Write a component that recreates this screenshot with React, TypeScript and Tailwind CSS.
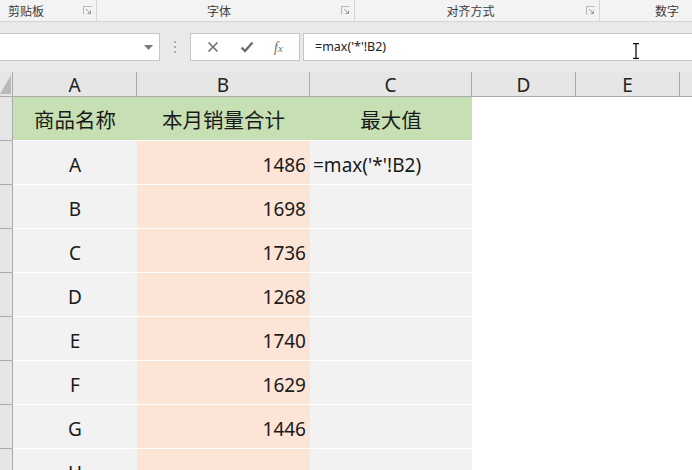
import React from 'react';

const font = { fontFamily: '"Noto Sans", "Noto Sans CJK SC", sans-serif' };

const rows = [
  { name: 'A', qty: '1486', max: "=max('*'!B2)" },
  { name: 'B', qty: '1698' },
  { name: 'C', qty: '1736' },
  { name: 'D', qty: '1268' },
  { name: 'E', qty: '1740' },
  { name: 'F', qty: '1629' },
  { name: 'G', qty: '1446' },
  { name: 'H', qty: '' },
];

function Launcher() {
  return (
    <svg width="9" height="9" viewBox="0 0 9 9" className="mt-[6px]">
      <path d="M0.5 8.5V0.5H8.5" fill="none" stroke="#b5b5b5" />
      <path d="M3 3L7.5 7.5M7.5 4.5V7.5H4.5" fill="none" stroke="#9a9a9a" />
    </svg>
  );
}

function RibbonGroup({ label, width, align = 'center' }: { label: string; width: string; align?: 'left' | 'center' }) {
  return (
    <div className={`${width} h-full flex items-start border-r border-[#d6d6d6] pr-[4px] shrink-0`}>
      <div className={`flex-1 pt-[3px] text-[12px] text-[#3b3b3b] ${align === 'left' ? 'pl-[8px] text-left' : 'text-center'}`}>
        {label}
      </div>
      <Launcher />
    </div>
  );
}

export default function App() {
  return (
    <div className="w-[692px] h-[470px] overflow-hidden bg-[#e9e9e9] text-[#1a1a1a]" style={font}>
      {/* ribbon group labels */}
      <div className="h-[22px] flex bg-[#f3f3f3] border-b border-[#d4d4d4]">
        <RibbonGroup label="剪贴板" width="w-[97px]" align="left" />
        <RibbonGroup label="字体" width="w-[258px]" />
        <RibbonGroup label="对齐方式" width="w-[245px]" />
        <div className="flex-1 pt-[3px] text-[12px] text-[#3b3b3b] text-right pr-[13px]">数字</div>
      </div>

      {/* formula bar */}
      <div className="h-[11px]" />
      <div className="h-[28px] flex items-stretch">
        <div className="w-[160px] bg-white border border-l-0 border-[#c6c6c6] flex items-center justify-end pr-[6px]">
          <svg width="9" height="5" viewBox="0 0 9 5">
            <path d="M0 0H9L4.5 5Z" fill="#7a7a7a" />
          </svg>
        </div>
        <div className="w-[30px] flex flex-col items-center justify-center gap-[3px]">
          <span className="w-[2px] h-[2px] bg-[#b0b0b0]" />
          <span className="w-[2px] h-[2px] bg-[#b0b0b0]" />
          <span className="w-[2px] h-[2px] bg-[#b0b0b0]" />
        </div>
        <div className="w-[110px] bg-white border border-[#c6c6c6] flex items-center justify-around px-[6px]">
          <svg width="12" height="12" viewBox="0 0 12 12">
            <path d="M1.5 1.5L10.5 10.5M10.5 1.5L1.5 10.5" stroke="#6e6e6e" strokeWidth="1.6" />
          </svg>
          <svg width="14" height="12" viewBox="0 0 14 12">
            <path d="M1.5 6.5L5 10L12.5 1.5" fill="none" stroke="#6e6e6e" strokeWidth="2.4" />
          </svg>
          <span className="text-[14px] italic text-[#6e6e6e]" style={{ fontFamily: '"Liberation Serif", serif' }}>
            f<span className="text-[11px]">x</span>
          </span>
        </div>
        <div className="flex-1 ml-[3px] bg-white border border-r-0 border-[#c6c6c6] flex items-center pl-[11px] relative">
          <span className="text-[12.5px] text-[#222]" style={{ fontFamily: '"Noto Sans", sans-serif' }}>
            =max('*'!B2)
          </span>
          <svg width="8" height="16" viewBox="0 0 8 16" className="absolute left-[328px] top-[9px]">
            <path d="M1 0.5H7M1 15.5H7M4 0.5V15.5" fill="none" stroke="#111" strokeWidth="1.3" />
          </svg>
        </div>
      </div>
      <div className="h-[11px]" />

      {/* column headers */}
      <div className="h-[25px] flex bg-[#e6e6e6] border-b border-[#ababab] text-[19px] leading-[27px] text-[#222]">
        <div className="w-[13px] border-r border-[#ababab] relative">
          <svg width="11" height="19" viewBox="0 0 11 19" className="absolute left-0 bottom-[2px]">
            <path d="M11 0V19H0Z" fill="#b9b9b9" />
          </svg>
        </div>
        <div className="w-[124px] text-center border-r border-[#ababab]">A</div>
        <div className="w-[173px] text-center border-r border-[#ababab]">B</div>
        <div className="w-[162px] text-center border-r border-[#ababab]">C</div>
        <div className="w-[104px] text-center border-r border-[#ababab]">D</div>
        <div className="w-[104px] text-center border-r border-[#ababab]">E</div>
        <div className="flex-1" />
      </div>

      {/* sheet body */}
      <div className="flex">
        <div className="w-[13px] bg-[#e6e6e6] border-r border-[#ababab] shrink-0">
          {[0, ...rows.map((_, i) => i + 1)].map((i) => (
            <div key={i} className="h-[44px] border-b border-[#ababab]" />
          ))}
        </div>
        <div className="flex-1 bg-white">
          <div className="h-[44px] flex text-[20.5px]">
            <div className="w-[459px] flex bg-[#c6e0b4] border-b border-white items-center pt-[3px]">
              <div className="w-[124px] text-center">商品名称</div>
              <div className="w-[173px] text-center">本月销量合计</div>
              <div className="w-[162px] text-center">最大值</div>
            </div>
          </div>
          {rows.map((r) => (
            <div key={r.name} className="h-[44px] flex text-[19px]">
              <div className="w-[124px] bg-[#f2f2f2] border-b border-white flex items-center justify-center pt-[5px]">
                {r.name}
              </div>
              <div className="w-[173px] bg-[#fce4d6] border-b border-white flex items-center justify-end pr-[4px] pt-[5px]">
                {r.qty}
              </div>
              <div className="w-[162px] bg-[#f2f2f2] border-b border-white flex items-center pl-[3px] pt-[5px] whitespace-nowrap">
                {r.max ?? ''}
              </div>
            </div>
          ))}
        </div>
      </div>
    </div>
  );
}
